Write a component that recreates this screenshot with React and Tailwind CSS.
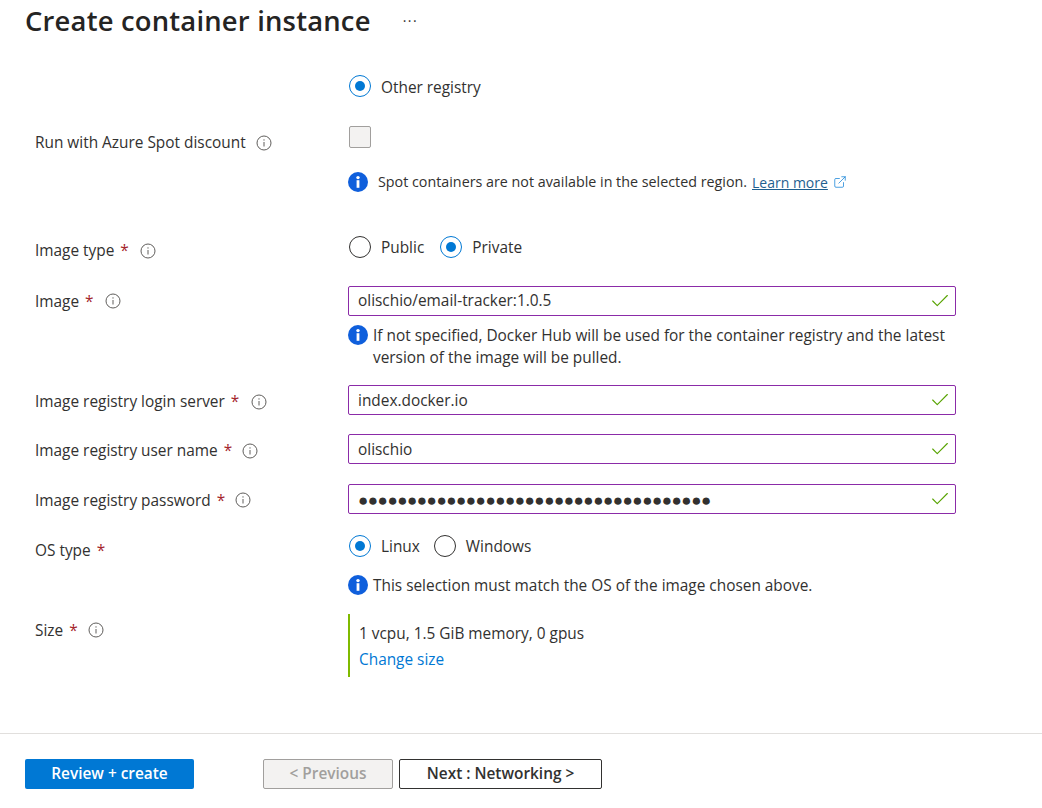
import { Check, ExternalLink } from 'lucide-react';

function InfoOutline() {
  return (
    <svg width="16" height="16" viewBox="0 0 16 16" fill="none" className="shrink-0" aria-hidden="true">
      <circle cx="8" cy="8" r="7" stroke="#605e5c" strokeWidth="1" />
      <path d="M8 7v4.5" stroke="#605e5c" strokeWidth="1" />
      <circle cx="8" cy="4.9" r="0.7" fill="#605e5c" />
    </svg>
  );
}

function InfoSolid() {
  return (
    <svg width="20" height="20" viewBox="0 0 20 20" className="shrink-0" aria-hidden="true">
      <circle cx="10" cy="10" r="10" fill="#0f5fdc" />
      <rect x="8.6" y="8.2" width="2.8" height="7.6" fill="#fff" />
      <circle cx="10" cy="5.6" r="1.7" fill="#fff" />
    </svg>
  );
}

function Radio({ checked, label, gap = 'mr-[14px]', textTop = 'pt-[2px]' }) {
  return (
    <div className={`flex items-center ${gap}`}>
      <span
        className={`flex h-[22px] w-[22px] items-center justify-center rounded-full border bg-white ${
          checked ? 'border-[#0078d4]' : 'border-[#323130]'
        }`}
      >
        {checked && <span className="h-[10px] w-[10px] rounded-full bg-[#0078d4]" />}
      </span>
      <span className={`ml-[10px] text-[#323130] ${textTop}`}>{label}</span>
    </div>
  );
}

function FieldLabel({ text, required, top, gap = 'ml-[10px]' }) {
  return (
    <div className={`flex w-[348px] shrink-0 items-center pl-[35px] ${top}`}>
      <span>{text}</span>
      {required && <span className="ml-[6px] text-[#a4262c]">*</span>}
      <span className={gap}>
        <InfoOutline />
      </span>
    </div>
  );
}

function TextField({ value, dots }) {
  return (
    <div className="flex h-[30px] w-[608px] items-center justify-between rounded-[2px] border border-[#8b2ba8] pl-[9px] pr-[4px]">
      <span className={dots ? 'text-[17px] tracking-[-0.47px]' : ''}>{value}</span>
      <Check size={22} strokeWidth={1.2} className="text-[#57a300]" />
    </div>
  );
}

export default function App() {
  const dots = '●'.repeat(36);

  return (
    <div
      className="flex h-[808px] w-[1042px] flex-col overflow-hidden bg-white text-[15.4px] text-[#323130]"
      style={{ fontFamily: '"Open Sans", "Noto Sans", sans-serif' }}
    >
      <div className="flex h-[42px] items-center pl-[25px]">
        <h1 className="text-[27.4px] font-semibold leading-none tracking-[0.2px] text-[#252423]">Create container instance</h1>
        <span className="ml-[32px] text-[14px] leading-none tracking-[1.5px] text-[#323130]">···</span>
      </div>

      <div className="mt-[33px] flex h-[22px]">
        <div className="w-[349px] shrink-0" />
        <Radio checked label="Other registry" textTop="pt-[3px]" />
      </div>

      <div className="mt-[29px] flex h-[22px]">
        <FieldLabel text="Run with Azure Spot discount" top="pt-[12px]" />
        <span className="ml-[1px] h-[22px] w-[22px] rounded-[2px] border border-[#a19f9d] bg-[#f3f2f1]" />
      </div>

      <div className="mt-[24px] flex h-[20px] items-center pl-[348px] text-[14.3px]">
        <InfoSolid />
        <span className="ml-[10px] pt-[1px]">Spot containers are not available in the selected region.</span>
        <span className="ml-[5px] pt-[1px] text-[14px] text-[#1f5f8f] underline">Learn more</span>
        <ExternalLink size={14} strokeWidth={1.2} className="ml-[5px] text-[#0078d4]" />
      </div>

      <div className="mt-[44px] flex h-[22px]">
        <FieldLabel text="Image type" required top="pt-[8px]" gap="ml-[11px]" />
        <div className="ml-[1px] flex">
          <Radio label="Public" gap="mr-[16px]" />
          <Radio checked label="Private" />
        </div>
      </div>

      <div className="mt-[28px] flex">
        <FieldLabel text="Image" required top="h-[30px] pt-[1px]" gap="ml-[11px]" />
        <TextField value="olischio/email-tracker:1.0.5" />
      </div>

      <div className="mt-[9px] flex h-[50px] pl-[348px] leading-[22px]">
        <InfoSolid />
        <p className="ml-[5px] w-[590px]">
          If not specified, Docker Hub will be used for the container registry and the latest version of the image will be pulled.
        </p>
      </div>

      <div className="mt-[11px] flex">
        <FieldLabel text="Image registry login server" required top="h-[30px] pt-[3px]" gap="ml-[12px]" />
        <TextField value="index.docker.io" />
      </div>

      <div className="mt-[19px] flex">
        <FieldLabel text="Image registry user name" required top="h-[30px] pt-[3px]" />
        <TextField value="olischio" />
      </div>

      <div className="mt-[20px] flex">
        <FieldLabel text="Image registry password" required top="h-[30px] pt-[2px]" />
        <TextField value={dots} dots />
      </div>

      <div className="mt-[21px] flex h-[22px]">
        <FieldLabel text="OS type" required top="h-[22px] pt-[9px]" gap="hidden" />
        <div className="ml-[1px] flex">
          <Radio checked label="Linux" textTop="pt-[1px]" />
          <Radio label="Windows" textTop="pt-[1px]" />
        </div>
      </div>

      <div className="mt-[18px] flex h-[20px] items-center pl-[348px]">
        <InfoSolid />
        <span className="ml-[5px] pt-[1px]">This selection must match the OS of the image chosen above.</span>
      </div>

      <div className="mt-[19px] flex">
        <FieldLabel text="Size" required top="h-[32px]" />
        <div className="flex h-[63px] w-[300px] flex-col border-l-2 border-[#7fba00] pl-[9px] pt-[10px]">
          <span className="leading-[20px]">1 vcpu, 1.5 GiB memory, 0 gpus</span>
          <span className="mt-[6px] leading-[20px] text-[#0078d4]">Change size</span>
        </div>
      </div>

      <div className="mt-[56px] flex h-[75px] items-start border-t border-[#e1dfdd] pl-[25px] pt-[25px]">
        <button type="button" className="h-[30px] w-[169px] rounded-[2px] bg-[#0078d4] pb-[1px] font-semibold text-white">
          Review + create
        </button>
        <button
          type="button"
          className="ml-[69px] h-[30px] w-[130px] rounded-[2px] border border-[#a19f9d] bg-[#f3f2f1] pb-[1px] font-semibold text-[#a19f9d]"
        >
          &lt; Previous
        </button>
        <button type="button" className="ml-[6px] h-[30px] w-[203px] rounded-[2px] border border-[#323130] bg-white pb-[1px] font-semibold">
          Next : Networking &gt;
        </button>
      </div>
    </div>
  );
}
